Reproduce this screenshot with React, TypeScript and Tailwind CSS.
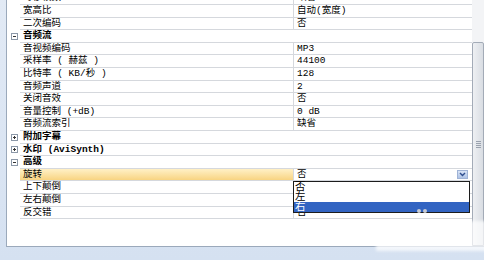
import React from 'react';

type Row =
  | { kind: 'prop'; name: string; value: string; selected?: boolean }
  | { kind: 'cat'; name: string; open: boolean };

const ROWS: Row[] = [
  { kind: 'prop', name: '每秒帧数', value: '缺省' },
  { kind: 'prop', name: '宽高比', value: '自动(宽度)' },
  { kind: 'prop', name: '二次编码', value: '否' },
  { kind: 'cat', name: '音频流', open: true },
  { kind: 'prop', name: '音视频编码', value: 'MP3' },
  { kind: 'prop', name: '采样率 ( 赫兹 )', value: '44100' },
  { kind: 'prop', name: '比特率 ( KB/秒 )', value: '128' },
  { kind: 'prop', name: '音频声道', value: '2' },
  { kind: 'prop', name: '关闭音效', value: '否' },
  { kind: 'prop', name: '音量控制 (+dB)', value: '0 dB' },
  { kind: 'prop', name: '音频流索引', value: '缺省' },
  { kind: 'cat', name: '附加字幕', open: false },
  { kind: 'cat', name: '水印 (AviSynth)', open: false },
  { kind: 'cat', name: '高级', open: true },
  { kind: 'prop', name: '旋转', value: '否', selected: true },
  { kind: 'prop', name: '上下颠倒', value: '否' },
  { kind: 'prop', name: '左右颠倒', value: '否' },
  { kind: 'prop', name: '反交错', value: '否' },
];

const OPTIONS = ['否', '左', '右'];

const Expander: React.FC<{ open: boolean }> = ({ open }) => (
  <svg width="7" height="7" viewBox="0 0 7 7" className="block">
    <rect x="0.5" y="0.5" width="6" height="6" fill="#fff" stroke="#8c98a8" />
    <line x1="2" y1="3.5" x2="5" y2="3.5" stroke="#333" />
    {!open && <line x1="3.5" y1="2" x2="3.5" y2="5" stroke="#333" />}
  </svg>
);

const DropButton: React.FC = () => (
  <div className="w-[11px] h-[9px] bg-gradient-to-b from-[#d9e4f6] to-[#aec3e6] border border-[#9fb3d6] flex items-center justify-center">
    <svg width="7" height="5" viewBox="0 0 7 5">
      <path d="M1 1 L3.5 3.5 L6 1" fill="none" stroke="#2f4f8f" strokeWidth="1.4" />
    </svg>
  </div>
);

const GridRow: React.FC<{ row: Row }> = ({ row }) => {
  if (row.kind === 'cat') {
    return (
      <div className="flex h-[12.6px]">
        <div className="w-[13px] flex items-center justify-center pl-[2px]">
          <Expander open={row.open} />
        </div>
        <div className="flex-1 border-b border-[#d5d8dd] pl-[3px] font-bold leading-[12px] whitespace-nowrap">
          {row.name}
        </div>
      </div>
    );
  }
  return (
    <div className="flex h-[12.6px]">
      <div className="w-[13px]" />
      <div
        className={`w-[274px] border-r border-b border-[#d5d8dd] pl-[3px] leading-[12px] whitespace-nowrap ${
          row.selected ? 'bg-gradient-to-b from-[#fff0c6] to-[#f8d481]' : ''
        }`}
      >
        {row.name}
      </div>
      <div className="flex-1 border-b border-[#d5d8dd] pl-[3px] pr-[4px] leading-[12px] flex items-start justify-between whitespace-nowrap">
        <span>{row.value}</span>
        {row.selected && (
          <div className="pt-[1px]">
            <DropButton />
          </div>
        )}
      </div>
    </div>
  );
};

const Scrollbar: React.FC = () => (
  <div className="w-[12px] flex flex-col bg-[#f3f4f6]">
    <div className="h-[42px]" />
    <div className="flex-1 border border-[#a3abb7] rounded-t-[2px] bg-gradient-to-r from-[#eef0f3] to-[#d9dde3] flex items-center justify-center">
      <div className="flex flex-col gap-[1px]">
        <div className="w-[5px] h-px bg-[#9aa2ae]" />
        <div className="w-[5px] h-px bg-[#9aa2ae]" />
        <div className="w-[5px] h-px bg-[#9aa2ae]" />
        <div className="w-[5px] h-px bg-[#9aa2ae]" />
      </div>
    </div>
  </div>
);

const App: React.FC = () => {
  return (
    <div className="relative w-[484px] h-[260px] overflow-hidden bg-gradient-to-b from-[#e2eaf5] to-[#d5e1f1] text-[9.5px] text-black font-['Liberation_Mono','Noto_Sans_CJK_SC',monospace]">
      <div className="flex h-[247px] ml-[6px] border-l border-b border-[#9ba9bb] bg-white">
        <div className="w-[465px] overflow-hidden">
          <div className="mt-[-7.6px]">
            {ROWS.map((row, i) => (
              <GridRow key={i} row={row} />
            ))}
          </div>
        </div>
        <Scrollbar />
      </div>

      {/* open dropdown list */}
      <div className="absolute left-[293px] top-[181px] w-[177px] border border-[#1c1c1c] bg-white">
        {OPTIONS.map((opt, i) => (
          <div
            key={opt}
            className={`h-[10px] leading-[10px] text-[10.5px] pl-[1px] ${
              i === 2 ? 'bg-[#3264c2] text-white' : ''
            }`}
          >
            {opt}
          </div>
        ))}
      </div>

      {/* faint watermark blur in the corner */}
      <div className="absolute left-[376px] top-[221px] w-[112px] h-[30px] rounded-tl-[14px] bg-white/70 blur-[1.5px]" />
      <div className="absolute left-[417px] top-[209px] flex gap-[2px]">
        <div className="w-[4px] h-[4px] rounded-full bg-[#c9ccd2] blur-[0.5px]" />
        <div className="w-[4px] h-[4px] rounded-full bg-[#c9ccd2] blur-[0.5px]" />
      </div>
    </div>
  );
};

export default App;
